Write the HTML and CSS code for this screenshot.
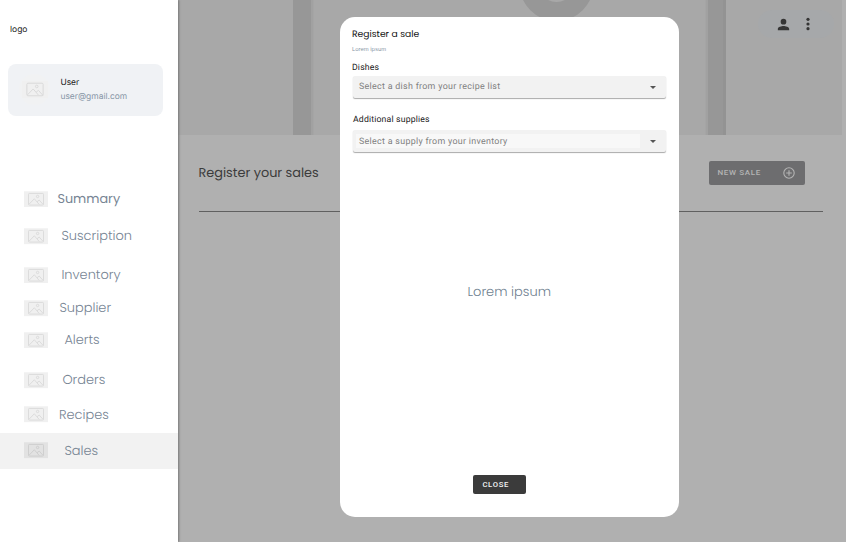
FILE: index.html
```html
<!DOCTYPE html>
<html lang="en">
<head>
<meta charset="utf-8">
<title>Register your sales</title>
<link rel="stylesheet" href="styles.css">
</head>
<body>
<svg width="0" height="0" class="defs" aria-hidden="true">
  <symbol id="pic" viewBox="0 0 24 16"><path class="pic-bg" d="M0 0h24v16H0z"/><g class="pic-line"><rect x="4.500" y="2.200" width="15" height="11.600" rx="1"/><path d="M5 13l5.300-5.500 5 5.800M13 10.500l2.200-1.700 4 4.500"/><circle cx="13.600" cy="5.200" r="1.200"/></g></symbol>
</svg>
<div class="app">
  <aside class="sidebar">
    <div class="logo">logo</div>
    <div class="user">
      <div class="avatar"><svg class="pic"><use href="#pic"/></svg></div>
      <div><div class="name">User</div><div class="mail">user@gmail.com</div></div>
    </div>
    <nav>
      <a class="item summary"><svg class="pic"><use href="#pic"/></svg><span>Summary</span></a>
      <a class="item suscription"><svg class="pic"><use href="#pic"/></svg><span>Suscription</span></a>
      <a class="item inventory"><svg class="pic"><use href="#pic"/></svg><span>Inventory</span></a>
      <a class="item supplier"><svg class="pic"><use href="#pic"/></svg><span>Supplier</span></a>
      <a class="item alerts"><svg class="pic"><use href="#pic"/></svg><span>Alerts</span></a>
      <a class="item orders"><svg class="pic"><use href="#pic"/></svg><span>Orders</span></a>
      <a class="item recipes"><svg class="pic"><use href="#pic"/></svg><span>Recipes</span></a>
      <a class="item sales"><svg class="pic"><use href="#pic"/></svg><span>Sales</span></a>
    </nav>
  </aside>
  <main>
    <div class="hero">
      <svg class="art" viewBox="0 0 664 135"><path fill="#979797" d="M115 0h18v135h-18zM530 0h15v135h-15z"/><path fill="#a1a1a1" d="M133 0h2.500v135H133zM527.500 0h2.500v135h-2.500z"/><path fill="#939393" d="M545 0h3v135h-3z"/><circle cx="378.500" cy="-16" r="27.500" fill="none" stroke="#979797" stroke-width="19"/></svg>
      <div class="actions">
        <svg width="17" height="17" viewBox="0 0 24 24"><path d="M12 12a4 4 0 1 0 0-8 4 4 0 0 0 0 8zm0 2c-2.700 0-8 1.340-8 4v2h16v-2c0-2.660-5.300-4-8-4z"/></svg>
        <svg width="16" height="16" viewBox="0 0 24 24"><circle cx="12" cy="5" r="2.400"/><circle cx="12" cy="12" r="2.400"/><circle cx="12" cy="19" r="2.400"/></svg>
      </div>
    </div>
    <header class="head">
      <h1>Register your sales</h1>
      <button class="new">NEW SALE<svg width="12" height="12" viewBox="0 0 12 12"><circle cx="6" cy="6" r="5.200"/><path d="M6 3.200v5.600M3.200 6h5.600"/></svg></button>
    </header>
  </main>
</div>
<section class="modal">
  <h2>Register a sale</h2>
  <p class="sub">Lorem ipsum</p>
  <label class="l1">Dishes</label>
  <div class="select"><span>Select a dish from your recipe list</span><i></i></div>
  <label class="l2">Additional supplies</label>
  <div class="select second"><span>Select a supply from your inventory</span><i></i></div>
  <div class="empty"><span>Lorem ipsum</span></div>
  <button class="close">CLOSE</button>
</section>
</body>
</html>
```
FILE: styles.css
```css
* { box-sizing: border-box; margin: 0; padding: 0; }
body { width: 846px; height: 542px; overflow: hidden; background: #b0b0b0; font-family: Poppins, Inter, sans-serif; color: #222; text-rendering: geometricPrecision; }
.defs { position: absolute; }
.app { display: flex; height: 542px; }
.sidebar { width: 178px; flex: none; background: #fff; box-shadow: 1px 0 2px #777; position: relative; }
.logo { height: 63.500px; padding: 24px 0 0 10px; font: 8.500px/12px Inter, sans-serif; }
.user { display: flex; width: 155px; height: 52.500px; margin-left: 8.400px; border-radius: 8px; background: #f0f2f5; }
.avatar { width: 31px; height: 31px; margin: 10.500px 10px 0 11px; border-radius: 50%; background: #f1f2f3; display: flex; align-items: center; justify-content: center; }
.pic { display: block; width: 24px; height: 16.500px; flex: none; }
.avatar .pic { width: 26px; height: 19px; }
.pic-bg { fill: #f0f0f0; }
.pic-line { fill: none; stroke: #d9d9d9; stroke-width: .9; }
.name, .mail { font: 8.450px/14px Inter, sans-serif; white-space: nowrap; }
.name { margin-top: 12.500px; }
.mail { color: #8795a5; }
nav { padding-top: 68px; }
.item { display: flex; align-items: center; height: 30px; padding-left: 24.400px; color: #778594; font-size: 12.950px; font-weight: 300; }
.item span { line-height: 20px; white-space: nowrap; }
.summary span { margin-left: 9px; margin-top: 1px; font-size: 12.800px; font-weight: 400; }
.suscription { margin-top: 7.500px; }
.suscription span, .inventory span { margin-left: 13px; margin-bottom: 1px; }
.inventory { margin-top: 8.500px; }
.inventory span { margin-bottom: 0; }
.supplier { margin-top: 3.500px; }
.supplier span { margin-left: 11px; margin-bottom: 1px; }
.alerts { margin-top: 1.500px; }
.alerts span { margin-left: 16px; }
.orders { margin-top: 10.500px; }
.orders span { margin-left: 14px; margin-bottom: 1px; }
.recipes { margin-top: 4px; }
.recipes span { margin-left: 10.500px; margin-top: 1px; }
.sales { margin-top: 3px; height: 36px; background: #f2f2f2; }
.sales .pic { filter: brightness(.94); }
.sales span { margin-left: 16px; margin-top: 1px; }
main { flex: 1; }
.hero { display: grid; width: 664px; height: 135px; background: #a8a8a8; }
.hero > * { grid-area: 1 / 1; }
.art { width: 664px; height: 135px; }
.actions { justify-self: end; display: flex; align-items: center; gap: 8px; width: 76px; height: 28px; margin: 10px 8px 0 0; padding-left: 16.500px; border-radius: 14px; background: #a6a8aa; fill: #353535; }
.head { display: flex; align-items: center; justify-content: space-between; height: 77px; margin: 0 23px 0 20.500px; padding-right: 18px; border-bottom: 1px solid #606060; }
h1 { margin-top: 2.500px; font-size: 12.850px; font-weight: 400; color: #3c3c3c; }
.new { display: flex; align-items: center; justify-content: space-between; width: 96.500px; height: 24.500px; padding: 0 10px 0 9px; border: 0; border-radius: 2px; background: #6d6d6f; color: #b4b4b4; font: 500 8px/14px Roboto, sans-serif; letter-spacing: .65px; }
.new svg { fill: none; stroke: #b4b4b4; stroke-width: 1.100; }
.modal { position: absolute; left: 339.500px; top: 17px; width: 339.500px; height: 500px; display: flex; flex-direction: column; padding: 11px 12.500px 0; border-radius: 15px; background: #fff; }
h2 { font-size: 9.200px; font-weight: 400; line-height: 14px; color: #111; }
.sub { margin-top: 4px; font: 5.600px/8px Inter, sans-serif; color: #8795a5; }
label { font-size: 8.700px; line-height: 12px; font-family: Roboto, sans-serif; letter-spacing: .16px; }
.l1 { margin-top: 8px; }
.l2 { margin: 16px 0 0 1px; }
.select { display: flex; align-items: center; justify-content: space-between; flex: none; height: 22px; margin: 2px .5px 0; padding: 0 10.500px 0 3.500px; border-radius: 2px; background: #f2f2f2; box-shadow: 0 1px 1px #aaa; font: 8.900px Roboto, sans-serif; letter-spacing: .3px; color: #808080; }
.select span { width: 284px; padding: 1px 0 0 3px; line-height: 13px; }
.select i { border: 3px solid transparent; border-top: 3px solid #555; border-bottom: 0; }
.select.second { margin-top: 4px; }
.select.second span { padding-top: 2px; line-height: 12px; background: #f8f8f8; }
.empty { display: flex; justify-content: center; align-items: center; height: 24px; margin-top: 128px; font-size: 13px; font-weight: 300; color: #6f7f90; }
.close { width: 53px; height: 19px; margin: 171px 0 0 121.400px; padding-left: 9px; border: 0; border-radius: 2px; background: #3b3b3b; color: #f4f4f4; font: 500 7.700px/19px Roboto, sans-serif; letter-spacing: .7px; text-align: left; }
```
